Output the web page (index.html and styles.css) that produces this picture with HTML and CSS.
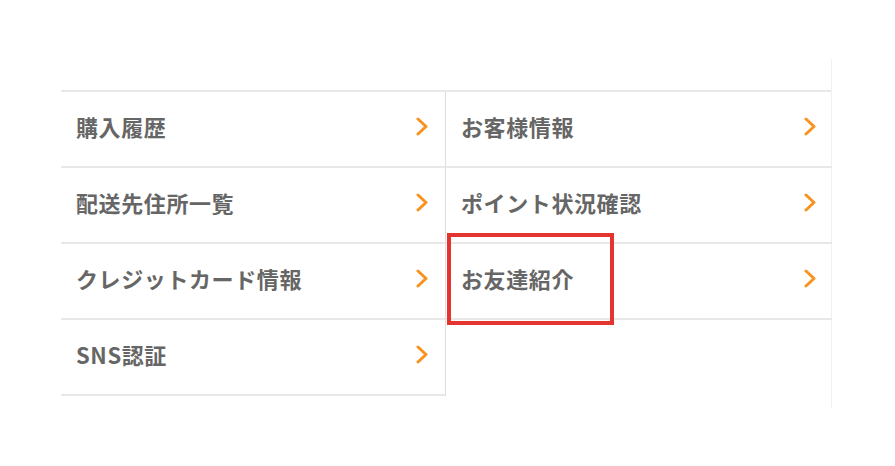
FILE: index.html
```html
<!DOCTYPE html>
<html lang="ja">
<head>
<meta charset="utf-8">
<link rel="stylesheet" href="styles.css">
</head>
<body>
<div class="page">
  <div class="frame">
    <ul class="menu">
      <li class="item left"><span class="label">購入履歴</span><svg class="chev" viewBox="0 0 12 19"><polyline points="2,2 10,9.5 2,17"/></svg></li>
      <li class="item"><span class="label">お客様情報</span><svg class="chev" viewBox="0 0 12 19"><polyline points="2,2 10,9.5 2,17"/></svg></li>
      <li class="item left"><span class="label">配送先住所一覧</span><svg class="chev" viewBox="0 0 12 19"><polyline points="2,2 10,9.5 2,17"/></svg></li>
      <li class="item"><span class="label">ポイント状況確認</span><svg class="chev" viewBox="0 0 12 19"><polyline points="2,2 10,9.5 2,17"/></svg></li>
      <li class="item left"><span class="label">クレジットカード情報</span><svg class="chev" viewBox="0 0 12 19"><polyline points="2,2 10,9.5 2,17"/></svg></li>
      <li class="item marked"><span class="label">お友達紹介</span><svg class="chev" viewBox="0 0 12 19"><polyline points="2,2 10,9.5 2,17"/></svg><span class="highlight"></span></li>
      <li class="item left"><span class="label">SNS認証</span><svg class="chev" viewBox="0 0 12 19"><polyline points="2,2 10,9.5 2,17"/></svg></li>
      <li class="item empty"></li>
    </ul>
  </div>
</div>
</body>
</html>
```

FILE: styles.css
```css
html, body {
  margin: 0;
  padding: 0;
  background: #ffffff;
}

.page {
  padding: 59px 0 0 61px;
  font-family: "Noto Sans CJK JP", "Noto Sans", sans-serif;
}

.frame {
  width: 771px;
  height: 349px;
  padding-top: 31px;
  box-sizing: border-box;
  border-right: 1px solid #eef0f6;
}

.menu {
  list-style: none;
  margin: 0;
  padding: 0;
  display: grid;
  grid-template-columns: 385px 386px;
  border-top: 2px solid #e8e8e8;
}

.item {
  position: relative;
  height: 74px;
  border-bottom: 2px solid #e8e8e8;
  display: flex;
  align-items: center;
  justify-content: space-between;
  padding: 0 16px 0 15px;
  box-sizing: content-box;
}

.item.left {
  border-right: 1px solid #dddddd;
  padding-right: 17px;
}

.item.empty {
  border-bottom: none;
}

.label {
  font-size: 22px;
  font-weight: 700;
  color: #666666;
  letter-spacing: 0.6px;
  line-height: 1;
  margin-top: -7px;
}

.chev {
  width: 12px;
  height: 19px;
  margin-top: -5px;
}

.chev polyline {
  fill: none;
  stroke: #f7931e;
  stroke-width: 3;
  stroke-linecap: round;
  stroke-linejoin: round;
}

.highlight {
  position: absolute;
  left: 1px;
  top: -11px;
  width: 159px;
  height: 84px;
  border: 4px solid #e3342f;
}
```
